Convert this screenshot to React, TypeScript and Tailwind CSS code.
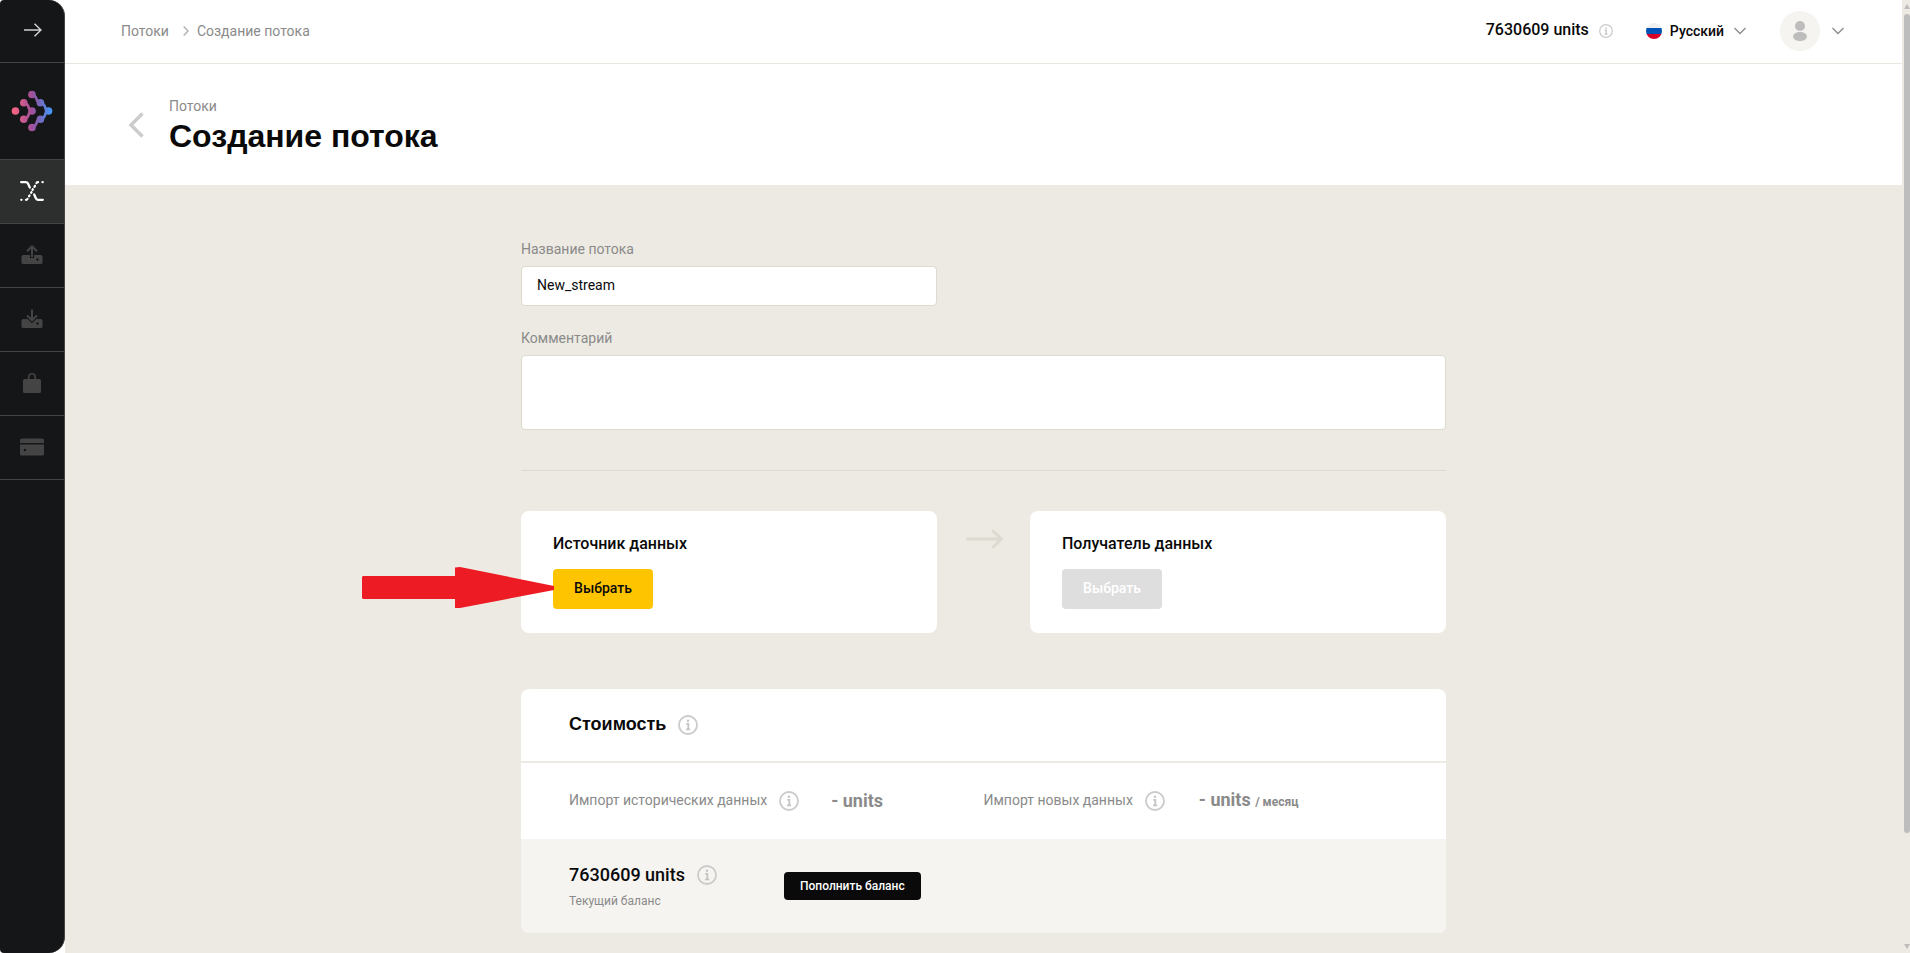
import React, { useState } from 'react';

const InfoIcon = ({ className }: { className: string }) => (
    <svg viewBox="0 0 20 20" className={className} fill="none">
        <circle cx="10" cy="10" r="9" stroke="#cbcbcb" strokeWidth="1.8" />
        <circle cx="10" cy="5.8" r="1.2" fill="#c4c4c4" />
        <path d="M8.3 8.9h2v5.3M8 14.4h4.2" stroke="#c4c4c4" strokeWidth="1.8" />
    </svg>
);

const ChevronDown = () => (
    <svg viewBox="0 0 12 8" className="h-2 w-3" fill="none" stroke="#8a8a8a" strokeWidth="1.3">
        <path d="M0.5 1 6 6.5 11.5 1" />
    </svg>
);

const Logo = () => (
    <svg viewBox="0 0 42 42" className="h-[42px] w-[42px]">
        <defs>
            <linearGradient id="logo" gradientUnits="userSpaceOnUse" x1="1" y1="0" x2="41" y2="0">
                <stop offset="0" stopColor="#fb6580" />
                <stop offset="0.5" stopColor="#a0509a" />
                <stop offset="0.7" stopColor="#7569bd" />
                <stop offset="1" stopColor="#419bff" />
            </linearGradient>
        </defs>
        <g fill="url(#logo)">
            <circle cx="4.5" cy="21" r="3.8" />
            <circle cx="12.8" cy="12.8" r="3.8" />
            <circle cx="12.8" cy="29.2" r="3.8" />
            <circle cx="21" cy="4.5" r="3.8" />
            <circle cx="21" cy="21" r="3.8" />
            <circle cx="21" cy="37.5" r="3.8" />
            <circle cx="29.4" cy="12.8" r="3.8" />
            <circle cx="29.4" cy="29.2" r="3.8" />
            <circle cx="37.5" cy="21" r="3.8" />
        </g>
        <g fill="none" stroke="url(#logo)" strokeWidth="2.6">
            <path d="M12.8 12.8Q17 14 17.5 17T21 21Q18 22 17.5 25T12.8 29.2" />
            <path d="M21 4.5Q25 6 25.5 9T29.4 12.8Q33.5 14 34 17T37.5 21Q34.5 22 34 25T29.4 29.2Q26 30 25.5 33T21 37.5" />
        </g>
    </svg>
);

const StreamsIcon = () => (
    <svg viewBox="0 0 24 20" className="h-5 w-6" fill="none" stroke="#fff" strokeWidth="2.3" strokeLinecap="round">
        <path d="M1.2 1.2h4.5q1.6 0 2.3 1.4L9.8 6.5M22.8 18.8h-4.5q-1.6 0-2.3-1.4L14.2 13.5" />
        <path d="M22.5 1.2h.2M18 1.2q-1 0-1.5.8M14.9 4.9l-.4.8M12.8 8.3l-.3.5M11.5 11.2l-.3.5M9.5 14.5l-.4.7M7.5 18q-.5.8-1.5.8M1.3 18.8h.2" />
    </svg>
);

const SourceIcon = () => (
    <svg viewBox="0 0 22 20" className="h-5 w-[22px]" fill="none">
        <rect x="0.5" y="10" width="21" height="9" rx="1.5" fill="#444" />
        <path d="M11 13V3" stroke="#151618" strokeWidth="4" />
        <path d="M11 12V1.5M6 6.3l5-4.8 5 4.8" stroke="#444" strokeWidth="2" />
        <circle cx="16.5" cy="14.5" r="1.2" fill="#151618" />
    </svg>
);

const TargetIcon = () => (
    <svg viewBox="0 0 22 20" className="h-5 w-[22px]" fill="none">
        <rect x="0.5" y="10" width="21" height="9" rx="1.5" fill="#444" />
        <path d="M6 8.5l5 4.7 5-4.7" stroke="#151618" strokeWidth="1.6" />
        <path d="M11 .5V11M6 6.5l5 4.8 5-4.8" stroke="#444" strokeWidth="2" />
        <circle cx="16.5" cy="14.5" r="1.2" fill="#151618" />
    </svg>
);

const BagIcon = () => (
    <svg viewBox="0 0 18 20" className="h-5 w-[18px]" fill="none">
        <rect y="6" width="18" height="14" rx="1.5" fill="#444" />
        <path d="M5.8 7V4a3.2 3.2 0 0 1 6.4 0v3" stroke="#444" strokeWidth="1.6" />
    </svg>
);

const CardIcon = () => (
    <svg viewBox="0 0 24 18" className="h-[18px] w-6" fill="#444">
        <path d="M2 .5h20a2 2 0 0 1 2 2V5H0V2.5a2 2 0 0 1 2-2ZM0 6.5h24V16a1.5 1.5 0 0 1-1.5 1.5h-21A1.5 1.5 0 0 1 0 16Z" />
        <circle cx="5" cy="12" r="1.2" fill="#151618" />
    </svg>
);

const menu = [
    { label: 'Потоки', icon: <StreamsIcon />, active: true },
    { label: 'Источники', icon: <SourceIcon />, active: false },
    { label: 'Получатели', icon: <TargetIcon />, active: false },
    { label: 'Магазин', icon: <BagIcon />, active: false },
    { label: 'Оплата', icon: <CardIcon />, active: false },
];

const Sidebar = () => (
    <aside className="w-[65px] shrink-0 overflow-hidden rounded-l-sm rounded-r-2xl border-r border-[#444] bg-[#151618]">
        <button aria-label="Развернуть меню" className="flex h-[63px] w-full items-center justify-center border-b border-[#444] pb-0.5 pl-0.5">
            <svg viewBox="0 0 18 14" className="h-3.5 w-[18px]" fill="none" stroke="#d0d0d0" strokeWidth="1.5">
                <path d="M0 7h17M10.5.7 17 7l-6.5 6.3" />
            </svg>
        </button>
        <a href="#" aria-label="Главная" className="flex h-[97px] items-center justify-center border-b border-[#444]">
            <Logo />
        </a>
        <nav>
            {menu.map((item) => (
                <a
                    key={item.label}
                    href="#"
                    aria-label={item.label}
                    className={`flex h-16 items-center justify-center border-b border-[#444] pb-px ${item.active ? 'bg-[#2d2f2e]' : ''}`}
                >
                    {item.icon}
                </a>
            ))}
        </nav>
    </aside>
);

const Header = () => (
    <header className="flex h-16 items-center border-b border-[#e9e7e0] bg-white pr-[58px] pb-px pl-14 text-sm">
        <nav className="flex items-center pb-px text-[#8a8a8a]">
            <a href="#">Потоки</a>
            <svg viewBox="0 0 6 10" className="mr-2 ml-3.5 h-2.5 w-1.5" fill="none" stroke="#b5b5b5" strokeWidth="1.6">
                <path d="M.7.5 5 5 .7 9.5" />
            </svg>
            <span>Создание потока</span>
        </nav>
        <div className="ml-auto flex items-center">
            <span className="pb-0.5 text-base font-medium">7630609 units</span>
            <InfoIcon className="ml-2.5 h-3.5 w-3.5" />
            <button className="ml-[33px] flex items-center font-medium">
                <svg viewBox="0 0 16 16" className="mr-2 h-4 w-4">
                    <clipPath id="flag">
                        <circle cx="8" cy="8" r="8" />
                    </clipPath>
                    <g clipPath="url(#flag)">
                        <rect width="16" height="6" fill="#f0f0f0" />
                        <rect y="5" width="16" height="6" fill="#0052b4" />
                        <rect y="11" width="16" height="5" fill="#d80027" />
                    </g>
                </svg>
                <span className="mr-2.5">Русский</span>
                <ChevronDown />
            </button>
            <button aria-label="Профиль" className="ml-[34px] flex items-center gap-3">
                <span className="flex h-10 w-10 items-center justify-center rounded-full bg-[#f5f4f0]">
                    <svg viewBox="0 0 14 20" className="h-5 w-3.5" fill="#bdbdbd">
                        <circle cx="7" cy="5" r="5" />
                        <ellipse cx="7" cy="15.5" rx="7" ry="4.5" />
                    </svg>
                </span>
                <ChevronDown />
            </button>
        </div>
    </header>
);

const App = () => {
    const [name, setName] = useState('New_stream');
    const [comment, setComment] = useState('');

    return (
        <div className="flex min-h-screen bg-white font-['Roboto',sans-serif] text-[#0a0a0a]">
            <Sidebar />

            <div className="flex min-w-0 flex-1 flex-col">
                <Header />

                <div className="flex items-center bg-white pt-8 pb-7 pl-[63px]">
                    <a href="#" aria-label="Назад" className="mr-[25px] pb-1">
                        <svg viewBox="0 0 16 26" className="h-[26px] w-4" fill="none" stroke="#ccc" strokeWidth="3.5">
                            <path d="M14.5 1.5 3 13l11.5 11.5" />
                        </svg>
                    </a>
                    <div>
                        <a href="#" className="block text-sm leading-5 text-[#8a8a8a]">Потоки</a>
                        <h1 className="font-['Liberation_Sans',sans-serif] text-[32px] leading-[41px] font-bold">Создание потока</h1>
                    </div>
                </div>

                <main className="flex-1 bg-[#edeae3] px-6 pt-[54px] pb-5">
                    <div className="mx-auto max-w-[925px]">
                        <label htmlFor="name" className="block text-sm leading-5 text-[#8a8a8a]">Название потока</label>
                        <input
                            id="name"
                            type="text"
                            className="mt-[7px] block h-10 w-[45%] rounded border border-[#dddacf] bg-white px-[15px] pb-0.5 text-sm"
                            value={name}
                            onChange={(e) => setName(e.target.value)}
                        />

                        <label htmlFor="comment" className="mt-[22px] block text-sm leading-5 text-[#8a8a8a]">Комментарий</label>
                        <textarea
                            id="comment"
                            className="mt-[7px] block h-[75px] w-full resize-none rounded border border-[#dddacf] bg-white px-[15px] py-2 text-sm"
                            value={comment}
                            onChange={(e) => setComment(e.target.value)}
                        />

                        <hr className="my-10 border-[#dddacf]" />

                        <div className="flex">
                            <section className="relative flex-1 rounded-lg bg-white px-8 pt-[21px] pb-6">
                                <h2 className="text-base leading-6 font-medium">Источник данных</h2>
                                <button className="mt-[13px] block h-10 w-[100px] rounded bg-[#ffc400] pb-0.5 text-sm font-medium">Выбрать</button>
                                {/* pointer to the first step */}
                                <svg viewBox="0 0 192 42" className="absolute top-14 -left-[159px] h-[42px] w-48" fill="#ed1c24">
                                    <path d="M1 9H93V.5L98 0 192 19v4L98 41 93 41V32H1L0 31V10Z" />
                                </svg>
                            </section>
                            <div className="flex w-[93px] justify-center pt-[18px] pl-0.5">
                                <svg viewBox="0 0 37 20" className="h-5 w-[37px]" fill="none" stroke="#dddacf" strokeWidth="3" strokeLinecap="round" strokeLinejoin="round">
                                    <path d="M1.5 10H35M27 2l8.500 8-8.500 8" />
                                </svg>
                            </div>
                            <section className="flex-1 rounded-lg bg-white px-8 pt-[21px] pb-6">
                                <h2 className="text-base leading-6 font-medium">Получатель данных</h2>
                                <button disabled className="mt-[13px] block h-10 w-[100px] rounded bg-[#dedede] pb-0.5 text-sm font-medium text-white">Выбрать</button>
                            </section>
                        </div>

                        <section className="mt-14 overflow-hidden rounded-lg bg-white">
                            <div className="flex h-[74px] items-center gap-3 border-b-2 border-[#edeae3] px-12">
                                <h2 className="pb-0.5 font-['Liberation_Sans',sans-serif] text-lg font-bold">Стоимость</h2>
                                <InfoIcon className="h-5 w-5" />
                            </div>
                            <div className="grid h-[76px] grid-cols-2 items-center px-12 text-sm text-[#8a8a8a]">
                                <div className="flex items-center">
                                    <span className="pb-0.5">Импорт исторических данных</span>
                                    <InfoIcon className="mr-8 ml-3 h-5 w-5" />
                                    <b className="text-lg">- units</b>
                                </div>
                                <div className="flex items-center">
                                    <span className="pb-0.5">Импорт новых данных</span>
                                    <InfoIcon className="mr-[34px] ml-3 h-5 w-5" />
                                    <b className="pb-0.5 text-lg">- units <span className="text-xs">/ месяц</span></b>
                                </div>
                            </div>
                            <div className="flex h-[94px] items-center bg-[#f6f4f0] px-12">
                                <div className="w-[215px] pb-0.5">
                                    <div className="flex items-center gap-3 text-lg font-medium">
                                        7630609 units
                                        <InfoIcon className="h-5 w-5" />
                                    </div>
                                    <p className="mt-1 text-xs text-[#8a8a8a]">Текущий баланс</p>
                                </div>
                                <button className="h-7 rounded bg-[#0a0a0a] px-4 text-xs font-medium text-white">Пополнить баланс</button>
                            </div>
                        </section>
                    </div>
                </main>
            </div>

            {/* scroll track */}
            <div className="flex w-2 flex-col items-end bg-[#edeae3] py-1">
                <svg viewBox="0 0 6 6" className="h-1.5 w-1.5" fill="#bdbdbd">
                    <path d="M3 0 6 5H0Z" />
                </svg>
                <div className="mt-1 w-1.5 flex-[819] rounded-full bg-[#bdbdbd]" />
                <div className="flex-[110]" />
                <svg viewBox="0 0 6 6" className="h-1.5 w-1.5" fill="#bdbdbd">
                    <path d="M0 1h6L3 6Z" />
                </svg>
            </div>
        </div>
    );
};

export default App;
